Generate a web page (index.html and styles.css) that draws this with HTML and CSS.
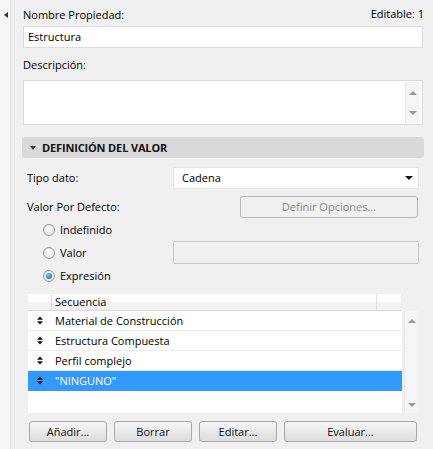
FILE: index.html
```html
<!DOCTYPE html>
<html>
<head>
<meta charset="utf-8">
<link rel="stylesheet" href="styles.css">
</head>
<body>
<div class="app">
  <div class="strip"><span class="strip-arrow"></span></div>
  <div class="panel">
    <div class="row-top">
      <span class="label">Nombre Propiedad:</span>
      <span class="editable">Editable: 1</span>
    </div>
    <div class="input name-input">Estructura</div>
    <div class="label desc-label">Descripción:</div>
    <div class="textarea">
      <div class="vscroll small"><span class="up"></span><span class="down"></span></div>
    </div>
    <div class="section"><span class="tri"></span>DEFINICIÓN DEL VALOR</div>
    <div class="form-row tipo">
      <span class="label">Tipo dato:</span>
      <div class="select">Cadena<span class="sel-arrow"></span></div>
    </div>
    <div class="form-row defecto">
      <span class="label">Valor Por Defecto:</span>
      <div class="btn disabled wide">Definir Opciones...</div>
    </div>
    <div class="radio-row"><span class="radio"></span><span class="label">Indefinido</span></div>
    <div class="radio-row valor-row"><span class="radio"></span><span class="label">Valor</span><div class="value-input"></div></div>
    <div class="radio-row"><span class="radio checked"></span><span class="label">Expresión</span></div>
    <div class="table">
      <div class="thead"><span class="th-c1"></span><span class="th-c2">Secuencia</span><span class="th-c3"></span></div>
      <div class="tbody">
        <div class="rows">
          <div class="tr"><svg class="grip" width="6" height="9" viewBox="0 0 6 9"><path d="M0 3.8 L3 0.5 L6 3.8 Z M0 5.2 L3 8.5 L6 5.2 Z" fill="#111"/></svg>Material de Construcción</div>
          <div class="tr"><svg class="grip" width="6" height="9" viewBox="0 0 6 9"><path d="M0 3.8 L3 0.5 L6 3.8 Z M0 5.2 L3 8.5 L6 5.2 Z" fill="#111"/></svg>Estructura Compuesta</div>
          <div class="tr"><svg class="grip" width="6" height="9" viewBox="0 0 6 9"><path d="M0 3.8 L3 0.5 L6 3.8 Z M0 5.2 L3 8.5 L6 5.2 Z" fill="#111"/></svg>Perfil complejo</div>
          <div class="tr sel"><svg class="grip" width="6" height="9" viewBox="0 0 6 9"><path d="M0 3.8 L3 0.5 L6 3.8 Z M0 5.2 L3 8.5 L6 5.2 Z" fill="#111"/></svg>"NINGUNO"</div>
        </div>
        <div class="vscroll big"><span class="up"></span><span class="down"></span></div>
      </div>
    </div>
    <div class="buttons">
      <div class="btn b1">Añadir...</div>
      <div class="btn b2">Borrar</div>
      <div class="btn b3">Editar...</div>
      <div class="btn b4">Evaluar...</div>
    </div>
  </div>
</div>
</body>
</html>
```
FILE: styles.css
```css
* { box-sizing: border-box; }
html, body { margin: 0; padding: 0; }
body {
  width: 433px; height: 449px; overflow: hidden;
  background: #f0f0f0;
  font-family: "Open Sans", "Noto Sans", sans-serif;
  font-size: 11px;
  color: #000;
}
.app { display: flex; height: 449px; }
.strip {
  width: 11px; background: #f7f7f7; border-right: 1px solid #e2e2e2;
  position: relative;
}
.strip-arrow {
  position: absolute; left: 4px; top: 12px;
  width: 0; height: 0;
  border-top: 3.5px solid transparent; border-bottom: 3.5px solid transparent;
  border-right: 4px solid #333;
}
.panel { flex: 1; padding: 0 10px 0 12px; display: flex; flex-direction: column; }
.label { line-height: 16px; white-space: nowrap; }
.row-top { display: flex; justify-content: space-between; align-items: flex-start; padding: 6px 0 0 0; height: 26px; }
.row-top .label { margin-top: 1px; }
.editable { margin-right: -1px; }
.input {
  height: 22px; background: #fff; border: 1px solid #dcdcdc;
  padding: 0 4px; line-height: 20px;
}
.desc-label { margin-top: 9px; height: 16px; }
.textarea {
  margin-top: 7px; height: 45px; background: #fff; border: 1px solid #dcdcdc;
  position: relative; display: flex; justify-content: flex-end;
}
.vscroll { width: 15px; background: #f5f5f5; border-left: 1px solid #e6e6e6; position: relative; }
.vscroll.small { margin: 1px 2px 1px 0; }
.vscroll .up, .vscroll .down {
  position: absolute; left: 3px; width: 0; height: 0;
  border-left: 4px solid transparent; border-right: 4px solid transparent;
}
.vscroll .up { top: 9px; border-bottom: 4px solid #999; }
.vscroll .down { bottom: 8px; border-top: 4px solid #999; }
.section {
  margin: 12px -1px 0 -1px; height: 21px; background: #d9d9d9; border-radius: 3px;
  font-weight: bold; font-size: 11px; line-height: 21px; padding-left: 20px; position: relative;
  color: #111; letter-spacing: -0.15px;
}
.section .tri {
  position: absolute; left: 8px; top: 9px; width: 0; height: 0;
  border-left: 3.5px solid transparent; border-right: 3.5px solid transparent;
  border-top: 4px solid #333;
}
.form-row { display: flex; align-items: center; justify-content: space-between; padding-left: 4px; }
.tipo { margin-top: 9px; height: 22px; }
.select {
  width: 246px; height: 22px; background: #fff; border: 1px solid #e4e4e4;
  line-height: 20px; padding-left: 8px; position: relative; margin-right: 4px;
}
.sel-arrow {
  position: absolute; right: 5px; top: 8px; width: 0; height: 0;
  border-left: 4px solid transparent; border-right: 4px solid transparent;
  border-top: 4px solid #111;
}
.defecto { margin-top: 6px; height: 23px; }
.btn {
  height: 22px; border: 1px solid #a8a8a8; border-radius: 3px;
  background: linear-gradient(#f6f6f6, #dcdcdc);
  text-align: center; line-height: 20px; color: #111;
}
.btn.disabled { background: #f0f0f0; border-color: #b8b8b8; color: #8a8a8a; }
.btn.wide { width: 178px; margin-right: 5px; }
.radio-row { display: flex; align-items: center; height: 23px; padding-left: 20px; }
.radio {
  width: 12px; height: 12px; border-radius: 50%; border: 1px solid #9a9a9a;
  background: radial-gradient(circle at 50% 40%, #fdfdfd, #dedede);
  margin-right: 5px; position: relative;
}
.radio.checked::after {
  content: ""; position: absolute; left: 2px; top: 2px; width: 6px; height: 6px; border-radius: 50%;
  background: radial-gradient(circle at 40% 35%, #7cc6f2, #0b5b9c);
}
.value-input {
  margin-left: auto; margin-right: 4px; width: 246px; height: 23px;
  background: #f0f0f0; border: 1px solid #c8c8c8; border-radius: 2px;
}
.table { margin: 7px 0 0 5px; width: 390px; }
.thead { display: flex; height: 17px; background: linear-gradient(#ffffff 50%, #f2f2f2 50%); border-bottom: 1px solid #d8d8d8; width: 373px; }
.th-c1 { width: 24px; border-right: 1px solid #e0e0e0; }
.th-c2 { flex: 1; padding-left: 3px; line-height: 16px; border-right: 1px solid #e0e0e0; }
.th-c3 { width: 24px; }
.tbody { display: flex; height: 102px; }
.rows { width: 374px; background: #fff; }
.tr { height: 20px; line-height: 20px; border-bottom: 1px solid #ececec; padding-left: 27px; position: relative; }
.tr .grip { position: absolute; left: 9px; top: 5px; }
.tr.sel { background: #3399ff; color: #fff; border-bottom-color: #3399ff; }
.vscroll.big { width: 14px; margin-left: 2px; }
.vscroll.big .up { top: 8px; }
.vscroll.big .down { bottom: 6px; }
.buttons { display: flex; margin-top: 8px; padding-left: 6px; gap: 7px; }
.buttons .btn { height: 21px; }
.b1, .b2, .b3 { width: 78px; }
.b4 { width: 133px; }
```
